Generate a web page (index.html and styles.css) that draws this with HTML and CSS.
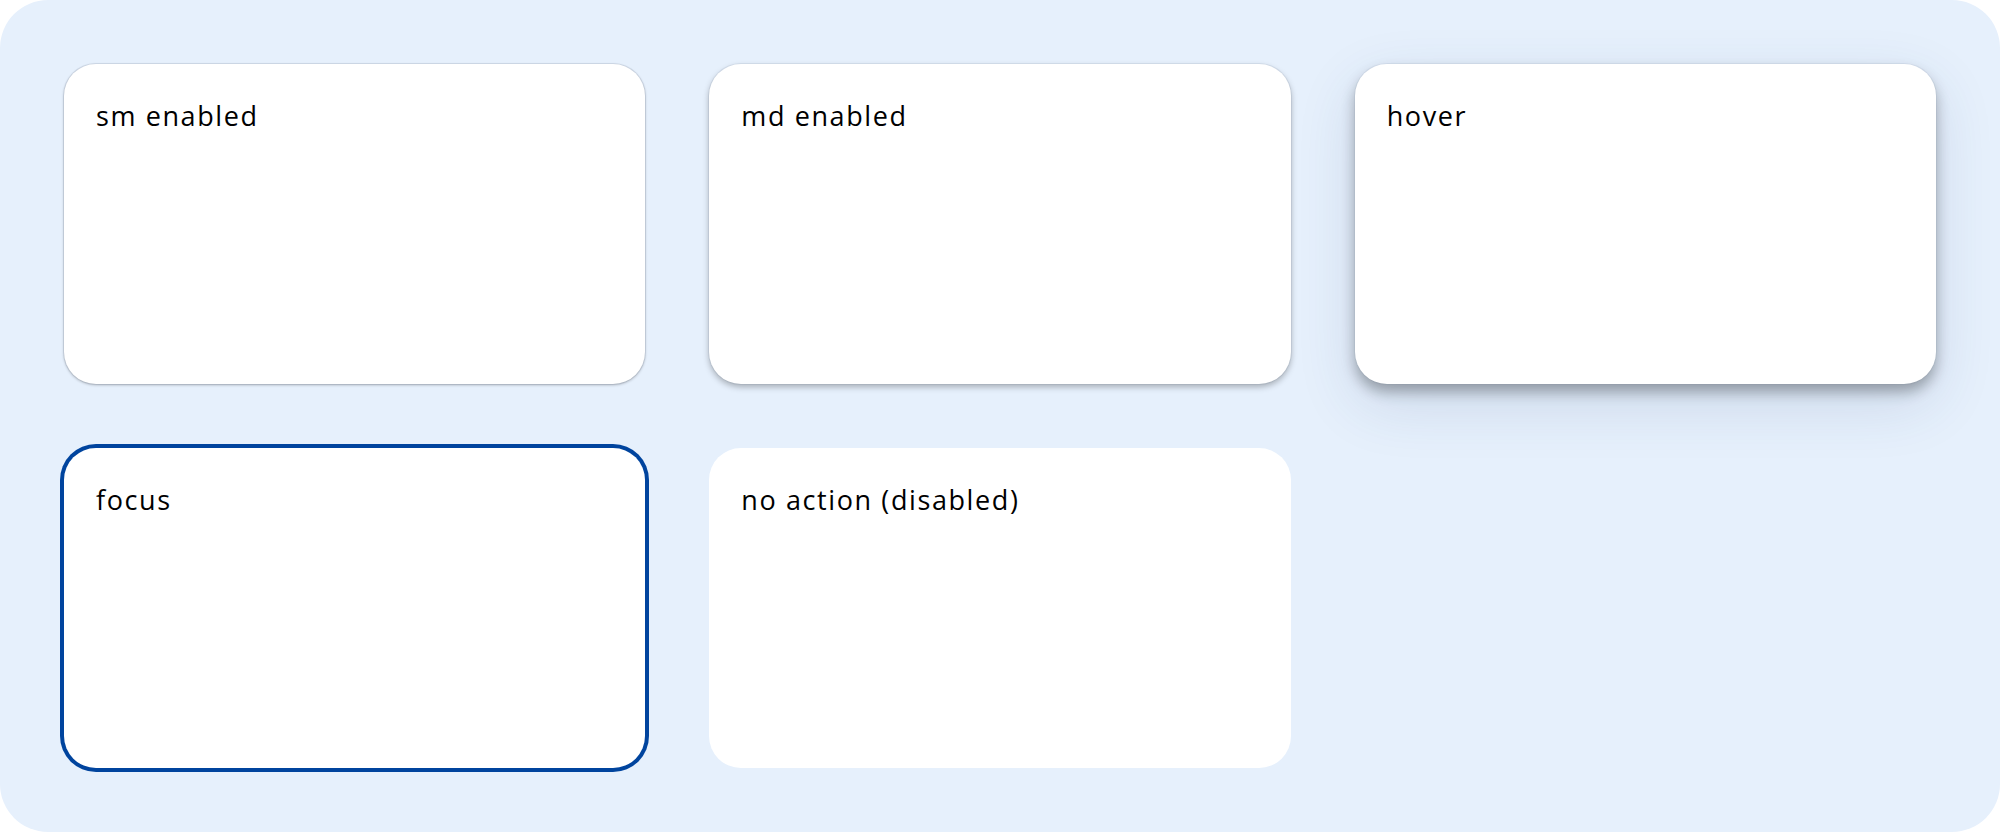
FILE: index.html
```html
<!DOCTYPE html>
<html lang="en">
<head>
  <meta charset="UTF-8">
  <title>Card states</title>
  <link rel="stylesheet" href="styles.css">
</head>
<body>

  <!-- Card states board -->
  <div class="board">
    <div class="card card-sm" tabindex="0">sm enabled</div>
    <div class="card card-md" tabindex="0">md enabled</div>
    <div class="card card-hover" tabindex="0">hover</div>
    <div class="card card-focus" tabindex="0">focus</div>
    <div class="card card-disabled">no action (disabled)</div>
  </div>

</body>
</html>
```

FILE: styles.css
```css
* {
  box-sizing: border-box;
}
body {
  margin: 0;
  background: #ffffff;
  font-family: 'Open Sans', 'DejaVu Sans', sans-serif;
}
.board {
  width: 2000px;
  height: 832px;
  padding: 64px;
  border-radius: 48px;
  background: #e6f0fc;
  display: grid;
  grid-template-columns: repeat(3, 1fr);
  grid-template-rows: 320px 320px;
  gap: 64px;
}

/* Cards */
.card {
  background: #ffffff;
  border-radius: 32px;
  padding: 32px;
  font-size: 27px;
  line-height: 40px;
  letter-spacing: 1.6px;
  color: #000000;
  outline: none;
}
.card-sm {
  box-shadow: 0 0 0 1px rgba(110, 125, 150, 0.16), 0 1px 3px rgba(0, 0, 0, 0.28);
}
.card-md {
  box-shadow: 0 0 0 1px rgba(110, 125, 150, 0.12), 0 3px 6px rgba(0, 0, 0, 0.28);
}
.card-hover {
  box-shadow: 0 0 0 1px rgba(110, 125, 150, 0.1), 0 8px 14px rgba(0, 0, 0, 0.3), 0 20px 60px rgba(40, 70, 120, 0.14);
}
.card-focus {
  box-shadow: 0 0 0 4px #00449e;
}
.card-disabled {
  box-shadow: none;
}
```
